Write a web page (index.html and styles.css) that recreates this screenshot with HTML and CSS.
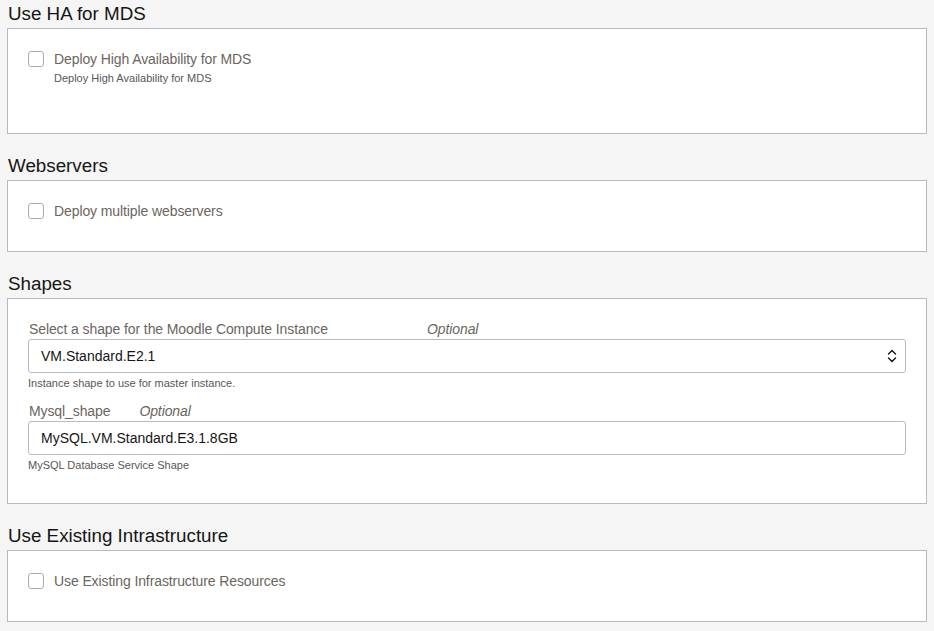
FILE: index.html
```html
<!DOCTYPE html>
<html lang="en">
<head>
<meta charset="utf-8">
<title>Configuration</title>
<link rel="stylesheet" href="styles.css">
</head>
<body>
<div class="page">
  <section class="section first">
    <h2 class="section-title">Use HA for MDS</h2>
    <div class="panel">
      <label class="check-row">
        <span class="checkbox"></span>
        <span class="check-label">Deploy High Availability for MDS</span>
      </label>
      <div class="check-desc">Deploy High Availability for MDS</div>
    </div>
  </section>

  <section class="section">
    <h2 class="section-title">Webservers</h2>
    <div class="panel">
      <label class="check-row">
        <span class="checkbox"></span>
        <span class="check-label">Deploy multiple webservers</span>
      </label>
    </div>
  </section>

  <section class="section">
    <h2 class="section-title">Shapes</h2>
    <div class="panel panel-fields">
      <div class="field">
        <div class="field-label"><span class="label-text label-wide">Select a shape for the Moodle Compute Instance</span><span class="optional">Optional</span></div>
        <div class="select">
          <span class="value">VM.Standard.E2.1</span>
          <svg class="chevrons" width="10" height="14" viewBox="0 0 10 14" aria-hidden="true">
            <path d="M1.5 5 L5 1.5 L8.5 5" fill="none" stroke="#161513" stroke-width="1.4" stroke-linecap="round" stroke-linejoin="round"/>
            <path d="M1.5 9 L5 12.5 L8.5 9" fill="none" stroke="#161513" stroke-width="1.4" stroke-linecap="round" stroke-linejoin="round"/>
          </svg>
        </div>
        <div class="help">Instance shape to use for master instance.</div>
      </div>
      <div class="field">
        <div class="field-label"><span class="label-text">Mysql_shape</span><span class="optional">Optional</span></div>
        <div class="input"><span class="value">MySQL.VM.Standard.E3.1.8GB</span></div>
        <div class="help">MySQL Database Service Shape</div>
      </div>
    </div>
  </section>

  <section class="section">
    <h2 class="section-title">Use Existing Intrastructure</h2>
    <div class="panel">
      <label class="check-row">
        <span class="checkbox"></span>
        <span class="check-label">Use Existing Infrastructure Resources</span>
      </label>
    </div>
  </section>
</div>
</body>
</html>
```

FILE: styles.css
```css
html, body {
  margin: 0;
  padding: 0;
  background: #f5f5f5;
}

body {
  font-family: "Liberation Sans", Arial, Helvetica, sans-serif;
  color: #161513;
}

.page {
  padding: 3px 7px 0 7px;
}

.section {
  margin-top: 21px;
}

.section.first {
  margin-top: 0;
}

.section-title {
  margin: 0 0 3px 1px;
  font-size: 18.8px;
  line-height: 22px;
  font-weight: normal;
  color: #161513;
}

.panel {
  background: #ffffff;
  border: 1px solid #b7bbc1;
  padding: 20px 20px 30px 20px;
}

.check-row {
  display: flex;
  align-items: center;
  height: 20px;
  gap: 10px;
}

.checkbox {
  box-sizing: border-box;
  width: 16px;
  height: 16px;
  border: 1px solid #a9acb0;
  border-radius: 3px;
  background: #fff;
  flex: none;
}

.check-label {
  font-size: 14px;
  line-height: 20px;
  letter-spacing: -0.1px;
  color: #6b6560;
}

.check-desc {
  margin: 1px 0 17px 26px;
  font-size: 11px;
  line-height: 16px;
  color: #5a5653;
}

.field + .field {
  margin-top: 10px;
}

.field-label {
  display: flex;
  font-size: 14px;
  line-height: 20px;
  letter-spacing: -0.1px;
  color: #6b6560;
  padding-left: 1px;
}

.label-wide {
  width: 398px;
}

.optional {
  font-style: italic;
  margin-left: 29px;
  color: #6b6560;
}

.label-wide + .optional {
  margin-left: 0;
}

.select,
.input {
  box-sizing: border-box;
  height: 34px;
  border: 1px solid #b7bbc1;
  border-radius: 3px;
  background: #fff;
  display: flex;
  align-items: center;
  justify-content: space-between;
  padding: 0 8px 0 12px;
}

.value {
  font-size: 14px;
  color: #161513;
}

.chevrons {
  display: block;
}

.help {
  margin-top: 2px;
  font-size: 11px;
  line-height: 16px;
  color: #5a5653;
}
```
